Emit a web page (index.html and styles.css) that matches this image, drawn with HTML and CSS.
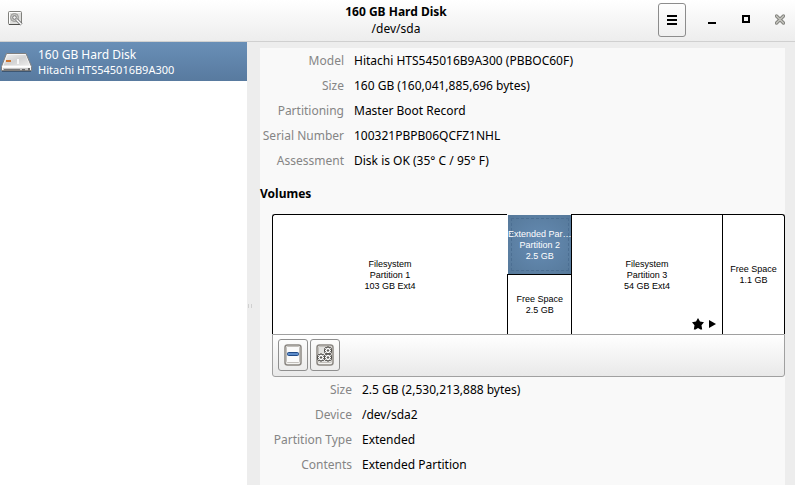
FILE: index.html
```html
<!DOCTYPE html>
<html lang="en">
<head>
    <meta charset="UTF-8" />
    <meta name="viewport" content="width=device-width, initial-scale=1.0"/>
    <title>160 GB Hard Disk</title>
    <link rel="stylesheet" href="styles.css">
</head>
<body>
    <header class="header-bar">
        <div class="header-start">
            <button class="icon-btn" aria-label="Disks">
                <svg width="16" height="16" viewBox="0 0 16 16">
                    <rect x="1.5" y="1.5" width="13" height="13" rx="1" fill="#dededc" stroke="#80807c"/>
                    <path d="M2.500 13.500V2.500h11" fill="none" stroke="#fff"/>
                    <path d="M2 14.500h12" stroke="#4f4f4c"/>
                    <circle cx="7.5" cy="7.5" r="4" fill="#c8c8c6" stroke="#9a9a97"/>
                    <circle cx="7.5" cy="7.5" r="1.800" fill="#f2f2f2" stroke="#777"/>
                    <path d="M9.500 9.500l5 5" stroke="#666" stroke-width="3"/>
                    <path d="M9.500 9.500l5 5" stroke="#fff" stroke-width="1.500"/>
                </svg>
            </button>
        </div>
        <div class="header-title">
            <h1>160 GB Hard Disk</h1>
            <p>/dev/sda</p>
        </div>
        <div class="header-end">
            <button class="menu-btn" aria-label="Menu">
                <svg width="10" height="10" viewBox="0 0 10 10"><path d="M0 0h10v2H0zM0 4h10v2H0zM0 8h10v2H0z"/></svg>
            </button>
            <button class="window-btn" aria-label="Minimize">
                <svg width="10" height="10" viewBox="0 0 10 10"><path d="M1 7h8v2H1z"/></svg>
            </button>
            <button class="window-btn" aria-label="Maximize">
                <svg width="10" height="10" viewBox="0 0 10 10"><path d="M2 1h6v6H2z" fill="none" stroke="#000" stroke-width="2"/></svg>
            </button>
            <button class="window-btn" aria-label="Close">
                <svg width="10" height="12" viewBox="1 0 10 12">
                    <path d="M2.5 2l7 7M9.5 2l-7 7" stroke="#858580" stroke-width="3.4" stroke-linecap="round"/>
                    <path d="M2.5 2l7 7M9.5 2l-7 7" stroke="#c4c4bd" stroke-width="1.4" stroke-linecap="round"/>
                </svg>
            </button>
        </div>
    </header>

    <div class="main">
        <nav class="sidebar">
            <button class="drive selected">
                <svg width="32" height="24" viewBox="0 0 32 24">
                    <defs>
                        <linearGradient id="drive-top" x1="0" y1="0" x2="1" y2="1">
                            <stop offset="0" stop-color="#f0f0f0"/>
                            <stop offset="0.5" stop-color="#d2d2d2"/>
                            <stop offset="1" stop-color="#ececec"/>
                        </linearGradient>
                    </defs>
                    <path d="M2 20.500h29v1.500H2z" fill="#3d5672"/>
                    <path d="M6.500 3.500h19.500l5.500 13v4H1.500v-4z" fill="#f6f6f6" stroke="#808080" stroke-linejoin="round"/>
                    <path d="M7.500 5H25.500l4 10.500h-26z" fill="url(#drive-top)"/>
                    <path d="M2.500 16.500h28" stroke="#fff"/>
                    <path d="M3 18h27v2H3z" fill="#c6c6c6"/>
                    <path d="M4 19h16v1.500H4z" fill="#777"/>
                    <path d="M22 19h3v1.500h-3zM28 18h2v2.500h-2z" fill="#666"/>
                    <path d="M6 10h5v2H6z" fill="#d0752e"/>
                    <path d="M17 9h2v5h-2z" fill="#f8f8f8"/>
                </svg>
                <span class="drive-text">
                    <span class="drive-name">160 GB Hard Disk</span>
                    <span class="drive-model">Hitachi HTS545016B9A300</span>
                </span>
            </button>
        </nav>
        <div class="splitter"><span class="grip"></span></div>

        <main class="content">
            <dl class="info">
                <dt>Model</dt><dd>Hitachi HTS545016B9A300 (PBBOC60F)</dd>
                <dt>Size</dt><dd>160 GB (160,041,885,696 bytes)</dd>
                <dt>Partitioning</dt><dd>Master Boot Record</dd>
                <dt>Serial Number</dt><dd>100321PBPB06QCFZ1NHL</dd>
                <dt>Assessment</dt><dd>Disk is OK (35° C / 95° F)</dd>
            </dl>

            <h2>Volumes</h2>

            <section class="volumes">
                <div class="volume-map">
                    <button class="volume first"><span>Filesystem</span><span>Partition 1</span><span>103 GB Ext4</span></button>
                    <div class="volume-group">
                        <button class="volume extended selected"><span>Extended Par…</span><span>Partition 2</span><span>2.5 GB</span></button>
                        <button class="volume logical"><span>Free Space</span><span>2.5 GB</span></button>
                    </div>
                    <button class="volume">
                        <span>Filesystem</span><span>Partition 3</span><span>54 GB Ext4</span>
                        <svg class="flags" width="26" height="12" viewBox="0 0 26 12">
                            <path d="M6 0l2 3.500 4 .8-2.500 3 .7 4.200H8.500L6 10l-2.500 1.500H1.800l.7-4.200L0 4.300l4-.8z"/>
                            <path d="M17 2l7 4-7 4z"/>
                        </svg>
                    </button>
                    <button class="volume last"><span>Free Space</span><span>1.1 GB</span></button>
                </div>
                <div class="toolbar">
                    <button class="tool-btn" aria-label="Delete partition">
                        <svg width="18" height="22" viewBox="0 0 18 22">
                            <rect x="1" y="1" width="16" height="20" rx="2.500" fill="#f4f4f2" stroke="#8c8883" stroke-width="1.500"/>
                            <rect x="2.500" y="2.500" width="13" height="16" rx="1" fill="#fafafa" stroke="#c2bfbb"/>
                            <rect x="3.500" y="8.500" width="11" height="3" rx="1" fill="#5c8bc9" stroke="#204a87"/>
                        </svg>
                    </button>
                    <button class="tool-btn" aria-label="Partition options">
                        <svg width="18" height="22" viewBox="0 0 18 22">
                            <rect x="1" y="1" width="16" height="20" rx="2.500" fill="#f4f4f2" stroke="#8c8883" stroke-width="1.500"/>
                            <rect x="2.500" y="2.500" width="13" height="16" rx="1" fill="#e2e2e0" stroke="#c2bfbb"/>
                            <defs>
                                <g id="gear" stroke="#44423f">
                                    <path d="M-1-3.500h2v1l1.500-.5.8 1-.8 1h1v2h-1l.8 1-.8 1L1 2.500v1h-2v-1L-2.500 3l-.8-1 .8-1h-1v-2h1l-.8-1 .8-1 1.500.5z" fill="#fff"/>
                                    <circle r=".8" fill="#999"/>
                                </g>
                            </defs>
                            <use href="#gear" x="12" y="6.500"/>
                            <use href="#gear" x="5" y="13.500"/>
                            <use href="#gear" x="12" y="13.500"/>
                        </svg>
                    </button>
                </div>
            </section>

            <dl class="info volume-info">
                <dt>Size</dt><dd>2.5 GB (2,530,213,888 bytes)</dd>
                <dt>Device</dt><dd>/dev/sda2</dd>
                <dt>Partition Type</dt><dd>Extended</dd>
                <dt>Contents</dt><dd>Extended Partition</dd>
            </dl>
        </main>
    </div>
</body>
</html>
```

FILE: styles.css
```css
:root {
    --bg-window: #ededed;
    --bg-content: #f9f9f9;
    --text-dim: #858585;
    --selected-top: #698fb7;
    --selected-bottom: #587a9f;
    --border: #a0a0a0;
}

* {
    box-sizing: border-box;
}

body {
    font-family: "Noto Sans", sans-serif;
    font-size: 12px;
    line-height: 17px;
    margin: 0;
    background-color: var(--bg-window);
    color: #000;
    display: flex;
    flex-direction: column;
    min-height: 100vh;
}

button {
    font: inherit;
    color: inherit;
    margin: 0;
    padding: 0;
    border: none;
    background: none;
}

svg {
    display: block;
}

h1, h2, p, dl, dd {
    margin: 0;
}

/* Header bar */
.header-bar {
    display: grid;
    grid-template-columns: 1fr auto 1fr;
    align-items: center;
    padding: 3px 10px 4px 7px;
    background: linear-gradient(#ffffff, #ededed);
    border-bottom: 1px solid #d0d0d0;
}

.header-title {
    text-align: center;
}

h1, h2 {
    font-size: 12px;
    font-weight: bold;
}

.header-end {
    display: flex;
    justify-content: flex-end;
    align-items: center;
    gap: 24px;
}

.menu-btn {
    width: 28px;
    height: 34px;
    margin-right: -3px;
    display: flex;
    align-items: center;
    justify-content: center;
    border: 1px solid #8c8c8c;
    border-radius: 3px;
}

/* Main area */
.main {
    flex: 1;
    display: grid;
    grid-template-columns: 247px 13px minmax(0, 1fr);
    padding-right: 10px;
}

.sidebar {
    background: #fff;
}

.drive {
    display: flex;
    align-items: center;
    width: 100%;
    height: 39px;
    gap: 6px;
    text-align: left;
}

.drive.selected {
    background: linear-gradient(var(--selected-top), var(--selected-bottom));
    color: #fff;
}

.drive-text {
    display: flex;
    flex-direction: column;
}

.drive-name {
    font-size: 12px;
}

.drive-model {
    font-size: 11px;
    line-height: 14px;
}

.splitter {
    display: flex;
    align-items: center;
    padding: 84px 0 0 1px;
}

.grip {
    width: 4px;
    height: 4px;
    border: solid #d0d0d0;
    border-width: 0 1px;
}

.content {
    margin-top: 6px;
    padding-top: 4px;
    background: var(--bg-content);
}

.info {
    display: grid;
    grid-template-columns: minmax(84px, auto) 1fr;
    gap: 8px 10px;
}

.info dt {
    color: var(--text-dim);
    text-align: right;
}

h2 {
    margin: 16px 0 12px;
}

/* Volumes */
.volumes,
.volume-info {
    margin-left: 12px;
}

.volume-info {
    grid-template-columns: minmax(80px, auto) 1fr;
    margin-top: 4px;
}

.volume-map {
    display: grid;
    grid-template-columns: minmax(0, 235fr) minmax(0, 64fr) minmax(0, 151fr) minmax(0, 63fr);
    height: 120px;
    font-family: "Liberation Sans", Arial, sans-serif;
    font-size: 9px;
    line-height: 11px;
}

.volume {
    position: relative;
    display: flex;
    flex-direction: column;
    align-items: center;
    justify-content: center;
    padding-top: 1px;
    background: #fff;
    border: solid #000;
    border-width: 1px 0 0 1px;
    white-space: nowrap;
}

.volume.first {
    border-top-left-radius: 3px;
}

.volume.last {
    border-right-width: 1px;
    border-top-right-radius: 3px;
}

.volume-group {
    display: grid;
    grid-template-rows: 59fr 60fr;
    padding-top: 1px;
}

.volume.extended {
    border-color: #fff;
    border-top: none;
    background: radial-gradient(#668cb4, #557899) padding-box;
    color: #fff;
}

/* Focus ring of the selected volume */
.volume.extended::after {
    content: "";
    position: absolute;
    inset: 3px;
    border: 1px dashed #4c6f93;
}

.flags {
    position: absolute;
    right: 4px;
    bottom: 4px;
}

.toolbar {
    display: flex;
    gap: 2px;
    padding: 4px 5px 5px;
    background: linear-gradient(#ffffff, #e9e9e9);
    border: 1px solid var(--border);
    border-radius: 0 0 3px 3px;
}

.tool-btn {
    width: 30px;
    height: 32px;
    display: flex;
    align-items: center;
    justify-content: center;
    border: 1px solid #8f8f8f;
    border-radius: 3px;
}
```
